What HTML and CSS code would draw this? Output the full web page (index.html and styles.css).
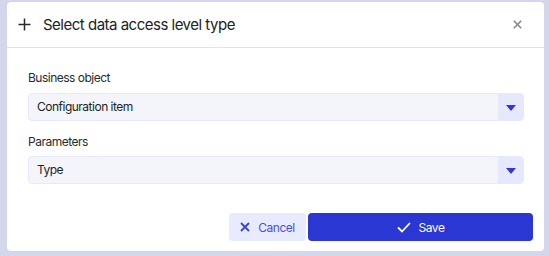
FILE: index.html
```html
<!DOCTYPE html>
<html lang="en">
<head>
    <meta charset="UTF-8">
    <meta name="viewport" content="width=device-width, initial-scale=1.0">
    <title>Select data access level type</title>
    <link rel="stylesheet" href="styles.css">
</head>
<body>
    <div class="dialog">
        <div class="dialog-header">
            <svg class="plus-icon" width="13" height="13" viewBox="0 0 13 13">
                <path d="M6.5 0.5v12M0.5 6.5h12" stroke="#2b2b2b" stroke-width="1.5" fill="none"/>
            </svg>
            <h1 class="dialog-title">Select data access level type</h1>
            <svg class="close-icon" width="9" height="9" viewBox="0 0 9 9">
                <path d="M0.8 0.8l7.4 7.4M8.2 0.8l-7.4 7.4" stroke="#858585" stroke-width="1.6" fill="none"/>
            </svg>
        </div>

        <div class="dialog-body">
            <div class="field">
                <label class="field-label">Business object</label>
                <div class="select">
                    <span class="select-value">Configuration item</span>
                    <span class="select-arrow"><span class="triangle"></span></span>
                </div>
            </div>
            <div class="field">
                <label class="field-label">Parameters</label>
                <div class="select">
                    <span class="select-value">Type</span>
                    <span class="select-arrow"><span class="triangle"></span></span>
                </div>
            </div>
        </div>

        <div class="dialog-footer">
            <button type="button" class="btn cancelbtn">
                <svg width="10" height="10" viewBox="0 0 10 10">
                    <path d="M1 1l8 8M9 1l-8 8" stroke="#3a40cf" stroke-width="1.8" fill="none"/>
                </svg>
                Cancel
            </button>
            <button type="button" class="btn savebtn">
                <svg width="14" height="11" viewBox="0 0 14 11">
                    <path d="M1 5.5l4 4l8-8.5" stroke="#ffffff" stroke-width="1.8" fill="none"/>
                </svg>
                Save
            </button>
        </div>
    </div>
</body>
</html>
```

FILE: styles.css
```css
* {
    box-sizing: border-box;
}

body {
    margin: 0;
    font-family: Inter, "Noto Sans", sans-serif;
    background-color: #d4d7ec;
    height: 256px;
    overflow: hidden;
}

.dialog {
    margin: 2px 0 0 7px;
    width: 537px;
    height: 249px;
    background-color: #ffffff;
    border-radius: 4px;
    display: flex;
    flex-direction: column;
}

.dialog-header {
    height: 46px;
    border-bottom: 1px solid #e3e3e6;
    display: flex;
    align-items: center;
    padding: 0 22px 0 11px;
}

.plus-icon {
    flex: none;
}

.dialog-title {
    margin: 0 0 0 12px;
    font-size: 15px;
    letter-spacing: -0.5px;
    font-weight: 400;
    color: #222222;
    flex: 1;
}

.dialog-body {
    padding: 22px 20px 0 21px;
}

.field {
    margin-bottom: 13px;
}

.field-label {
    display: block;
    font-size: 12px;
    letter-spacing: -0.5px;
    line-height: 16px;
    color: #2a2a2a;
    margin-bottom: 7px;
}

.field:last-child .field-label {
    margin-bottom: 6px;
}

.select {
    height: 28px;
    display: flex;
    background-color: #f4f5fa;
    border: 1px solid #e6e9f8;
    border-radius: 4px;
    overflow: hidden;
}

.select-value {
    flex: 1;
    font-size: 12px;
    letter-spacing: -0.5px;
    line-height: 26px;
    color: #222222;
    padding-left: 8px;
}

.select-arrow {
    width: 25px;
    background-color: #e6e9fd;
    display: flex;
    align-items: center;
    justify-content: center;
}

.triangle {
    width: 0;
    height: 0;
    border-left: 5px solid transparent;
    border-right: 5px solid transparent;
    border-top: 6px solid #3138d3;
    margin-top: 1px;
}

.dialog-footer {
    margin-top: auto;
    display: flex;
    justify-content: flex-end;
    gap: 2px;
    padding: 0 11px 10px 0;
}

.btn {
    height: 28px;
    border: none;
    border-radius: 4px;
    font-family: Inter, "Noto Sans", sans-serif;
    font-size: 12px;
    letter-spacing: -0.5px;
    display: flex;
    align-items: center;
    justify-content: center;
    gap: 8px;
    cursor: pointer;
}

.cancelbtn {
    width: 77px;
    background-color: #e8ebfd;
    color: #4a50d4;
}

.savebtn {
    width: 225px;
    background-color: #2b37d3;
    color: #ffffff;
}
```
